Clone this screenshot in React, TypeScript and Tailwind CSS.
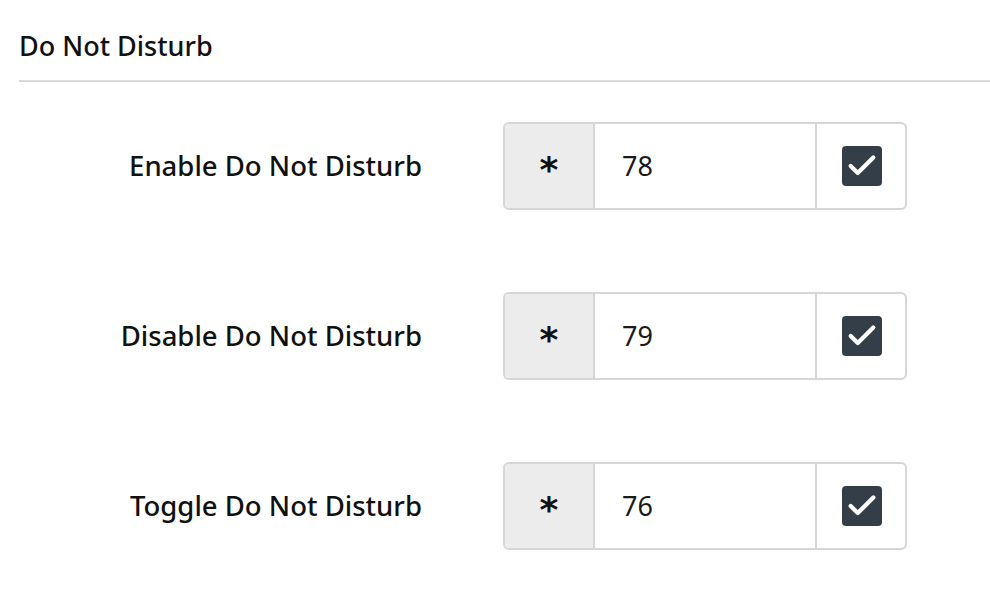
import { Check } from 'lucide-react';

const rows = [
  { label: 'Enable Do Not Disturb', value: '78' },
  { label: 'Disable Do Not Disturb', value: '79' },
  { label: 'Toggle Do Not Disturb', value: '76' },
];

const ShortcutRow = ({ label, value }: { label: string; value: string }) => {
  return (
    <div className="flex items-center">
      <div className="w-[422px] text-right text-[27.5px] font-medium text-[#111]">{label}</div>
      <div className="ml-[81px] flex h-[88px] w-[404px] rounded-md border-2 border-[#d6d6d6] overflow-hidden">
        <div className="flex w-[90px] items-center justify-center bg-[#ececec] border-r-2 border-[#d6d6d6] text-[36px] font-bold text-[#111]">
          <span className="mt-[8px]" style={{ fontFamily: '"DejaVu Sans", sans-serif' }}>*</span>
        </div>
        <div className="flex flex-1 items-center pl-[27px] text-[27px] text-[#1a1a1a]">{value}</div>
        <div className="flex w-[90px] items-center justify-center border-l-2 border-[#d6d6d6]">
          <div className="ml-[2px] flex h-[40px] w-[40px] items-center justify-center rounded-[4px] bg-[#333e49]">
            <Check className="h-[34px] w-[34px] text-white" strokeWidth={3} />
          </div>
        </div>
      </div>
    </div>
  );
};

export default function App() {
  return (
    <div className="min-h-[602px] w-[990px] bg-white" style={{ fontFamily: '"Noto Sans", "Liberation Sans", sans-serif' }}>
      <div className="ml-[19px] border-b-2 border-[#d9d9d9] pt-[26px] pb-[14px] text-[27px] leading-[40px] font-medium text-[#111]">
        Do Not Disturb
      </div>
      <div className="flex flex-col gap-[82px] pt-[40px]">
        {rows.map(r => (
          <ShortcutRow key={r.label} label={r.label} value={r.value} />
        ))}
      </div>
    </div>
  );
}
